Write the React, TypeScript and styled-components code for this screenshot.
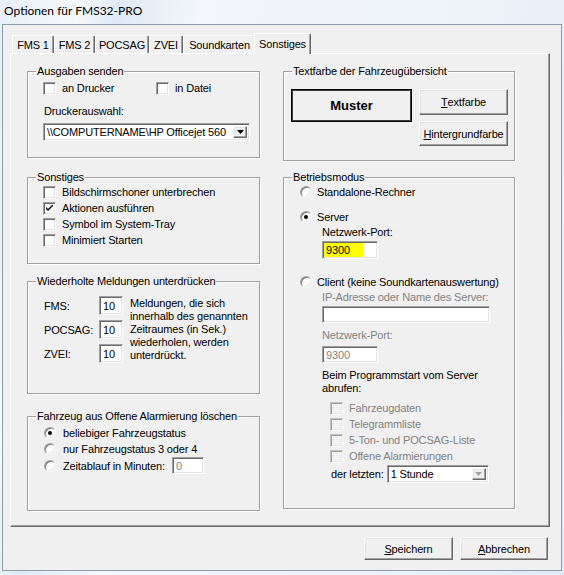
import React from "react";
import styled, { createGlobalStyle, css } from "styled-components";

const GlobalStyle = createGlobalStyle`
  html, body {
    margin: 0;
    padding: 0;
  }
  body {
    width: 564px;
    height: 575px;
    overflow: hidden;
    background: #dde7f3;
    font-family: "Liberation Sans", Arial, sans-serif;
    font-size: 11px;
    letter-spacing: -0.15px;
    color: #000;
  }
`;

// classic 3D edges
const sunken = css`
  border: 1px solid;
  border-color: #a0a0a0 #fff #fff #a0a0a0;
  box-shadow: inset 1px 1px 0 #696969, inset -1px -1px 0 #e3e3e3;
`;

const raised = css`
  border: 1px solid;
  border-color: #fff #696969 #696969 #fff;
  box-shadow: inset -1px -1px 0 #a0a0a0, inset 1px 1px 0 #e3e3e3;
`;

const Frame = styled.div`
  width: 564px;
  height: 575px;
  box-sizing: border-box;
  padding: 0 2px 4px 2px;
  display: flex;
  flex-direction: column;
  background: linear-gradient(100deg, #e8eff8 0%, #f6f8fb 12%, #dfeaf6 18%, #f3f6fa 30%, #eef3f9 70%, #e2ebf6 100%);
`;

const TitleBar = styled.div`
  height: 24px;
  box-sizing: border-box;
  padding: 3px 0 0 2px;
  font-family: Lato, "Noto Sans", sans-serif;
  font-size: 12px;
  letter-spacing: 0;
  line-height: 16px;
  color: #000;
`;

const Client = styled.div`
  flex: 1;
  display: flex;
  flex-direction: column;
  background: #f0f0f0;
  border: 1px solid #8d9aab;
  padding: 8px 11px 10px 7px;
`;

const TabRow = styled.div`
  display: flex;
  align-items: flex-end;
  height: 20px;
  padding-left: 2px;
`;

const Tab = styled.div<{ $width: number; $active?: boolean }>`
  position: relative;
  flex: none;
  box-sizing: border-box;
  width: ${(p) => p.$width}px;
  height: 18px;
  display: flex;
  align-items: center;
  justify-content: center;
  background: #f0f0f0;
  border-top: 1px solid #fff;
  border-left: 1px solid #fff;
  border-right: 1px solid #696969;
  box-shadow: inset -1px 0 0 #a0a0a0;
  border-radius: 2px 2px 0 0;
  ${(p) =>
    p.$active &&
    css`
      height: 21px;
      margin: 0 0 -1px -2px;
      padding-bottom: 1px;
      z-index: 1;
    `}
`;

const Panel = styled.div`
  height: 474px;
  box-sizing: border-box;
  border-top: 1px solid #fff;
  border-left: 1px solid #fff;
  border-right: 1px solid #696969;
  border-bottom: 1px solid #696969;
  box-shadow: inset -1px -1px 0 #a0a0a0;
  padding: 11px 0 0 16px;
  display: grid;
  grid-template-columns: 233px 232px;
  column-gap: 23px;
  align-items: start;
`;

const Column = styled.div`
  display: flex;
  flex-direction: column;
`;

const Group = styled.fieldset<{ $height: number; $space?: number }>`
  margin: ${(p) => p.$space ?? 0}px 0 0 0;
  padding: 0;
  min-width: 0;
  height: ${(p) => p.$height}px;
  box-sizing: border-box;
  border: 1px solid #a0a0a0;
  box-shadow: 1px 1px 0 #fff, inset 1px 1px 0 #fff;
`;

const Legend = styled.legend`
  margin-left: 8px;
  padding: 0 1px;
  line-height: 13px;
  background: #f0f0f0;
`;

const Body = styled.div<{ $top: number; $left: number }>`
  display: flex;
  flex-direction: column;
  align-items: flex-start;
  padding: ${(p) => p.$top}px 0 0 ${(p) => p.$left}px;
`;

const Line = styled.div<{ $space?: number; $indent?: number; $muted?: boolean }>`
  line-height: 13px;
  margin: ${(p) => p.$space ?? 0}px 0 0 ${(p) => p.$indent ?? 0}px;
  color: ${(p) => (p.$muted ? "#838383" : "#000")};
  white-space: nowrap;
`;

const Inline = styled.div`
  display: flex;
  align-items: center;
`;

const Option = styled.div<{ $gap?: number; $width?: number; $space?: number; $indent?: number; $muted?: boolean }>`
  display: flex;
  align-items: center;
  height: 16px;
  gap: ${(p) => p.$gap ?? 6}px;
  margin: ${(p) => p.$space ?? 0}px 0 0 ${(p) => p.$indent ?? 0}px;
  ${(p) => p.$width && `width: ${p.$width}px;`}
  color: ${(p) => (p.$muted ? "#838383" : "#000")};
  white-space: nowrap;
`;

const CheckBox = styled.span<{ $muted?: boolean }>`
  flex: none;
  width: 13px;
  height: 13px;
  box-sizing: border-box;
  ${sunken};
  background: ${(p) => (p.$muted ? "#f4f4f4" : "#fff")};
  display: flex;
  align-items: center;
  justify-content: center;
  ${(p) =>
    p.$muted &&
    css`
      border-color: #c0c0c0 #fff #fff #c0c0c0;
      box-shadow: inset 1px 1px 0 #a0a0a0, inset -1px -1px 0 #e3e3e3;
    `}
`;

const Radio = styled.span`
  flex: none;
  width: 12px;
  height: 12px;
  box-sizing: border-box;
  border-radius: 50%;
  border: 1px solid;
  border-color: #a0a0a0 #f8f8f8 #f8f8f8 #a0a0a0;
  box-shadow: inset 1px 1px 0 #7a7a7a, inset -1px -1px 0 #e3e3e3;
  background: #fff;
  display: flex;
  align-items: center;
  justify-content: center;
`;

const Dot = styled.span`
  width: 4px;
  height: 4px;
  border-radius: 50%;
  background: #000;
`;

const Edit = styled.div<{ $width: number; $height: number; $space?: number; $indent?: number; $muted?: boolean; $fill?: number }>`
  box-sizing: border-box;
  width: ${(p) => p.$width}px;
  height: ${(p) => p.$height}px;
  margin: ${(p) => p.$space ?? 0}px 0 0 ${(p) => p.$indent ?? 0}px;
  ${sunken};
  background: ${(p) =>
    p.$fill ? `linear-gradient(to right, #ffff00 0 ${p.$fill}px, #fff ${p.$fill}px)` : "#fff"};
  color: ${(p) => (p.$muted ? "#838383" : "#000")};
  padding-left: 3px;
  display: flex;
  align-items: center;
  white-space: nowrap;
  overflow: hidden;
`;

const Combo = styled.div<{ $width: number; $space?: number }>`
  box-sizing: border-box;
  width: ${(p) => p.$width}px;
  height: 18px;
  margin-top: ${(p) => p.$space ?? 0}px;
  ${sunken};
  background: #fff;
  display: flex;
  align-items: center;
  padding: 0 2px 0 3px;
  white-space: nowrap;
`;

const ComboText = styled.span`
  flex: 1;
  overflow: hidden;
`;

const ComboButton = styled.span<{ $muted?: boolean }>`
  flex: none;
  width: 14px;
  height: 12px;
  box-sizing: border-box;
  ${raised};
  background: #f0f0f0;
  display: flex;
  align-items: center;
  justify-content: center;
  color: ${(p) => (p.$muted ? "#a0a0a0" : "#000")};
`;

const RepeatGrid = styled.div`
  display: grid;
  grid-template-columns: 48px 24px auto;
  grid-auto-rows: 19px;
  row-gap: 5px;
  column-gap: 7px;
  align-items: center;
  margin: 8px 0 0 16px;
`;

const Note = styled.p`
  grid-column: 3;
  grid-row: 1 / span 3;
  align-self: start;
  margin: 1px 0 0;
  line-height: 13px;
  white-space: nowrap;
`;

const ColorRow = styled.div`
  display: flex;
  gap: 7px;
  margin: 11px 0 0 7px;
`;

const Sample = styled.div`
  width: 121px;
  height: 33px;
  box-sizing: border-box;
  border: 1px solid #000;
  box-shadow: inset 0 0 0 1px #3c3c3c;
  display: flex;
  align-items: center;
  justify-content: center;
  font-weight: bold;
  font-size: 13px;
  letter-spacing: 0;
`;

const ButtonStack = styled.div`
  display: flex;
  flex-direction: column;
  gap: 6px;
`;

const Button = styled.div<{ $width: number; $height: number }>`
  width: ${(p) => p.$width}px;
  height: ${(p) => p.$height}px;
  box-sizing: border-box;
  ${raised};
  background: #f0f0f0;
  display: flex;
  align-items: center;
  justify-content: center;
  white-space: nowrap;
`;

const Footer = styled.div`
  display: flex;
  justify-content: flex-end;
  gap: 7px;
  margin: 10px 2px 0 0;
`;

const Check = () => (
  <svg width="7" height="7" viewBox="0 0 7 7">
    <path d="M0 2 L0 4 L2 6 L7 1 L7 -1 L2 4 Z" fill="#000" />
  </svg>
);

const Arrow = () => (
  <svg width="7" height="4" viewBox="0 0 7 4">
    <path d="M0 0 H7 L3.5 4 Z" fill="currentColor" />
  </svg>
);

const tabs = [
  { label: "FMS 1", width: 42 },
  { label: "FMS 2", width: 41 },
  { label: "POCSAG", width: 54 },
  { label: "ZVEI", width: 34 },
  { label: "Soundkarten", width: 73 },
  { label: "Sonstiges", width: 57, active: true },
];

export default function App() {
  return (
    <>
      <GlobalStyle />
      <Frame>
        <TitleBar>Optionen für FMS32-PRO</TitleBar>
        <Client>
          <TabRow>
            {tabs.map((t) => (
              <Tab key={t.label} $width={t.width} $active={t.active}>
                {t.label}
              </Tab>
            ))}
          </TabRow>
          <Panel>
            <Column>
              <Group $height={93}>
                <Legend>Ausgaben senden</Legend>
                <Body $top={2} $left={15}>
                  <Inline>
                    <Option $width={113}>
                      <CheckBox />
                      an Drucker
                    </Option>
                    <Option>
                      <CheckBox />
                      in Datei
                    </Option>
                  </Inline>
                  <Line $space={9} $indent={1}>Druckerauswahl:</Line>
                  <Combo $width={207} $space={5}>
                    <ComboText>\\COMPUTERNAME\HP Officejet 560</ComboText>
                    <ComboButton>
                      <Arrow />
                    </ComboButton>
                  </Combo>
                </Body>
              </Group>

              <Group $height={93} $space={13}>
                <Legend>Sonstiges</Legend>
                <Body $top={0} $left={15}>
                  <Option>
                    <CheckBox />
                    Bildschirmschoner unterbrechen
                  </Option>
                  <Option>
                    <CheckBox>
                      <Check />
                    </CheckBox>
                    Aktionen ausführen
                  </Option>
                  <Option>
                    <CheckBox />
                    Symbol im System-Tray
                  </Option>
                  <Option>
                    <CheckBox />
                    Minimiert Starten
                  </Option>
                </Body>
              </Group>

              <Group $height={119} $space={11}>
                <Legend>Wiederholte Meldungen unterdrücken</Legend>
                <RepeatGrid>
                  <span>FMS:</span>
                  <Edit $width={24} $height={19}>10</Edit>
                  <Note>
                    Meldungen, die sich
                    <br />
                    innerhalb des genannten
                    <br />
                    Zeitraumes (in Sek.)
                    <br />
                    wiederholen, werden
                    <br />
                    unterdrückt.
                  </Note>
                  <span>POCSAG:</span>
                  <Edit $width={24} $height={19}>10</Edit>
                  <span>ZVEI:</span>
                  <Edit $width={24} $height={19}>10</Edit>
                </RepeatGrid>
              </Group>

              <Group $height={101} $space={16}>
                <Legend>Fahrzeug aus Offene Alarmierung löschen</Legend>
                <Body $top={2} $left={16}>
                  <Option $gap={7}>
                    <Radio>
                      <Dot />
                    </Radio>
                    beliebiger Fahrzeugstatus
                  </Option>
                  <Option $gap={7}>
                    <Radio />
                    nur Fahrzeugstatus 3 oder 4
                  </Option>
                  <Inline>
                    <Option $gap={7} $width={128}>
                      <Radio />
                      Zeitablauf in Minuten:
                    </Option>
                    <Edit $width={32} $height={17} $muted>
                      0
                    </Edit>
                  </Inline>
                </Body>
              </Group>
            </Column>

            <Column>
              <Group $height={96}>
                <Legend>Textfarbe der Fahrzeugübersicht</Legend>
                <ColorRow>
                  <Sample>Muster</Sample>
                  <ButtonStack>
                    <Button $width={89} $height={26}>
                      <u>T</u>extfarbe
                    </Button>
                    <Button $width={89} $height={25}>
                      <u>H</u>intergrundfarbe
                    </Button>
                  </ButtonStack>
                </ColorRow>
              </Group>

              <Group $height={338} $space={10}>
                <Legend>Betriebsmodus</Legend>
                <Body $top={0} $left={16}>
                  <Option $gap={5}>
                    <Radio />
                    Standalone-Rechner
                  </Option>
                  <Option $gap={5} $space={9}>
                    <Radio>
                      <Dot />
                    </Radio>
                    Server
                  </Option>
                  <Line $space={1} $indent={22}>Netzwerk-Port:</Line>
                  <Edit $width={56} $height={18} $space={2} $indent={22} $fill={40}>
                    9300
                  </Edit>
                  <Option $gap={5} $space={15}>
                    <Radio />
                    Client (keine Soundkartenauswertung)
                  </Option>
                  <Line $space={1} $indent={22} $muted>
                    IP-Adresse oder Name des Server:
                  </Line>
                  <Edit $width={168} $height={17} $space={2} $indent={22} />
                  <Line $space={6} $indent={22} $muted>
                    Netzwerk-Port:
                  </Line>
                  <Edit $width={56} $height={17} $space={4} $indent={22} $muted>
                    9300
                  </Edit>
                  <Line $space={6} $indent={22}>Beim Programmstart vom Server</Line>
                  <Line $indent={22}>abrufen:</Line>
                  <Option $space={5} $indent={30} $muted>
                    <CheckBox $muted />
                    Fahrzeugdaten
                  </Option>
                  <Option $indent={30} $muted>
                    <CheckBox $muted />
                    Telegrammliste
                  </Option>
                  <Option $indent={30} $muted>
                    <CheckBox $muted />
                    5-Ton- und POCSAG-Liste
                  </Option>
                  <Option $indent={30} $muted>
                    <CheckBox $muted />
                    Offene Alarmierungen
                  </Option>
                  <Option $space={2} $indent={31} $gap={3}>
                    der letzten:
                    <Combo $width={102}>
                      <ComboText>1 Stunde</ComboText>
                      <ComboButton $muted>
                        <Arrow />
                      </ComboButton>
                    </Combo>
                  </Option>
                </Body>
              </Group>
            </Column>
          </Panel>
          <Footer>
            <Button $width={89} $height={23}>
              <u>S</u>peichern
            </Button>
            <Button $width={88} $height={23}>
              <u>A</u>bbrechen
            </Button>
          </Footer>
        </Client>
      </Frame>
    </>
  );
}
